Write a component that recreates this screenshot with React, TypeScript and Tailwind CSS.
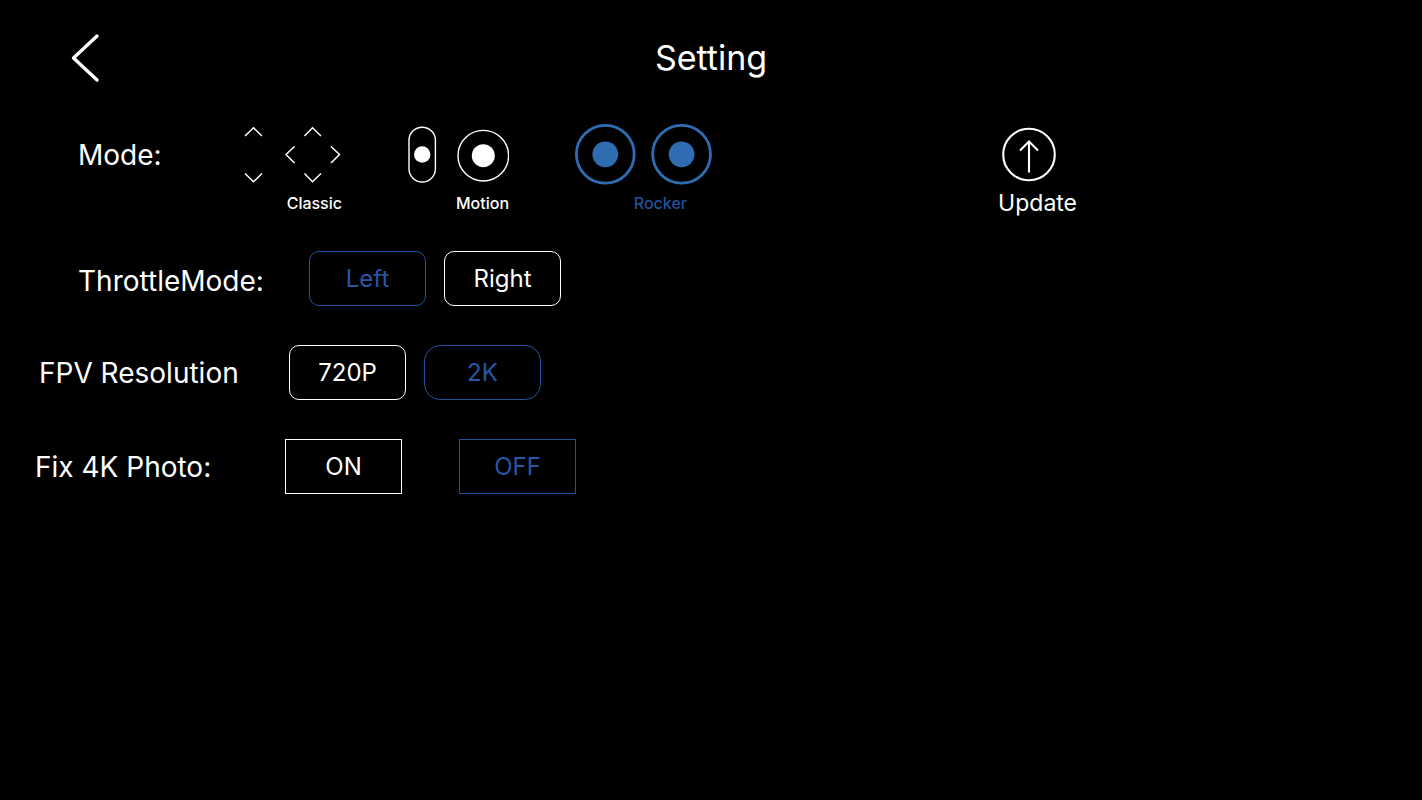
import { useState } from "react";
import type { ReactNode } from "react";
import clsx from "clsx";

type Mode = "classic" | "motion" | "rocker";

const ClassicIcon = () => (
  <svg width="98" height="62" viewBox="0 0 98 62" fill="none" stroke="currentColor" strokeWidth="1.5">
    <path d="M1 12 9.500 3.700 18 12M1 49.500 9.500 57.700 18 49.500" />
    <path d="M60.500 12 68.500 3.700 77 12M60.500 49.500 68.500 57.700 77 49.500" />
    <path d="M50.500 22.500 42 30.500l8.500 8.500M87 22.500l8.500 8-8.500 8.500" />
  </svg>
);

const MotionIcon = () => (
  <svg width="102" height="62" viewBox="0 0 102 62" fill="none" stroke="currentColor" strokeWidth="1.4">
    <rect x="2" y="3.200" width="26.400" height="54.800" rx="13.200" />
    <circle cx="15.200" cy="30.500" r="8.200" fill="currentColor" stroke="none" />
    <circle cx="76.300" cy="31.700" r="25.300" />
    <circle cx="76.300" cy="31.700" r="11.500" fill="currentColor" stroke="none" />
  </svg>
);

const RockerIcon = () => (
  <svg width="138" height="62" viewBox="0 0 138 62" fill="none" stroke="currentColor" strokeWidth="2.8">
    <circle cx="31.300" cy="30.300" r="28.900" />
    <circle cx="31.300" cy="30.300" r="12.900" fill="currentColor" stroke="none" />
    <circle cx="107.600" cy="30.300" r="28.900" />
    <circle cx="107.600" cy="30.300" r="12.900" fill="currentColor" stroke="none" />
  </svg>
);

const UpdateIcon = () => (
  <svg width="56" height="62" viewBox="0 0 56 62" fill="none" stroke="currentColor" strokeWidth="2.1">
    <circle cx="28" cy="30.500" r="25.800" />
    <path d="M28 48.500V17M19 26.500 28 17.500l9 9" />
  </svg>
);

interface ModeButtonProps {
  label: string;
  active: boolean;
  onClick: () => void;
  className?: string;
  labelClassName?: string;
  children: ReactNode;
}

const ModeButton = ({
  label,
  active,
  onClick,
  className,
  labelClassName,
  children,
}: ModeButtonProps) => (
  <button
    type="button"
    aria-pressed={active}
    onClick={onClick}
    className={clsx(
      "flex shrink-0 cursor-pointer flex-col items-end gap-2",
      active ? "text-[#2f6db3]" : "text-white",
      className,
    )}
  >
    {children}
    <span
      className={clsx(
        "text-base leading-[18px] font-medium",
        active && "text-[#25509c]",
        labelClassName,
      )}
    >
      {label}
    </span>
  </button>
);

interface OptionButtonProps {
  label: string;
  active: boolean;
  onClick: () => void;
  className?: string;
}

const OptionButton = ({ label, active, onClick, className }: OptionButtonProps) => (
  <button
    type="button"
    aria-pressed={active}
    onClick={onClick}
    className={clsx(
      "h-[55px] w-[117px] shrink-0 cursor-pointer border text-2xl",
      active ? "border-[#24509a] text-[#2757a5]" : "border-white text-white",
      className,
    )}
  >
    {label}
  </button>
);

export default function App() {
  const [mode, setMode] = useState<Mode>("rocker");
  const [throttle, setThrottle] = useState("Left");
  const [resolution, setResolution] = useState("2K");
  const [fixPhoto, setFixPhoto] = useState(false);

  return (
    <main className="min-h-screen bg-black font-['Inter',sans-serif] text-white">
      <header className="grid h-[116px] grid-cols-3 items-center">
        <button type="button" aria-label="Back" className="ml-[70px] w-8 cursor-pointer">
          <svg width="32" height="50" viewBox="0 0 32 50" fill="none" stroke="currentColor" strokeWidth="3.4" strokeLinecap="round" strokeLinejoin="round">
            <path d="M27 3 3.500 25 27 47" />
          </svg>
        </button>
        <h1 className="text-center text-[34px] leading-10">Setting</h1>
      </header>

      <div className="flex flex-col gap-[39px] pt-2">
        {/* Control mode */}
        <section className="flex items-start pl-[78px]">
          <h2 className="w-[166px] shrink-0 text-[28px] leading-[62px]">Mode:</h2>
          <ModeButton label="Classic" active={mode === "classic"} onClick={() => setMode("classic")}>
            <ClassicIcon />
          </ModeButton>
          <ModeButton
            label="Motion"
            active={mode === "motion"}
            onClick={() => setMode("motion")}
            className="ml-[65px]"
          >
            <MotionIcon />
          </ModeButton>
          <ModeButton
            label="Rocker"
            active={mode === "rocker"}
            onClick={() => setMode("rocker")}
            className="ml-[65px]"
            labelClassName="pr-[25px]"
          >
            <RockerIcon />
          </ModeButton>
          <button
            type="button"
            className="mr-[345px] ml-auto flex cursor-pointer flex-col items-start gap-2"
          >
            <span className="pl-[3px]">
              <UpdateIcon />
            </span>
            <span className="text-[23px] leading-[18px]">Update</span>
          </button>
        </section>

        {/* Throttle side */}
        <section className="flex items-center pl-[78px]">
          <h2 className="w-[231px] shrink-0 pt-1 text-[28px] leading-10">ThrottleMode:</h2>
          <div className="flex gap-[18px]">
            {["Left", "Right"].map((side) => (
              <OptionButton
                key={side}
                label={side}
                active={throttle === side}
                onClick={() => setThrottle(side)}
                className="rounded-[10px]"
              />
            ))}
          </div>
        </section>

        {/* FPV video resolution */}
        <section className="flex items-center pl-[39px]">
          <h2 className="w-[250px] shrink-0 text-[28px] leading-10">FPV Resolution</h2>
          <div className="flex gap-[18px]">
            <OptionButton
              label="720P"
              active={resolution === "720P"}
              onClick={() => setResolution("720P")}
              className="rounded-[10px]"
            />
            <OptionButton
              label="2K"
              active={resolution === "2K"}
              onClick={() => setResolution("2K")}
              className="rounded-[16px]"
            />
          </div>
        </section>

        {/* 4K photo fix */}
        <section className="flex items-center pl-[35px]">
          <h2 className="w-[250px] shrink-0 text-[28px] leading-10">Fix 4K Photo:</h2>
          <div className="flex gap-[57px]">
            <OptionButton label="ON" active={fixPhoto} onClick={() => setFixPhoto(true)} />
            <OptionButton label="OFF" active={!fixPhoto} onClick={() => setFixPhoto(false)} />
          </div>
        </section>
      </div>
    </main>
  );
}
